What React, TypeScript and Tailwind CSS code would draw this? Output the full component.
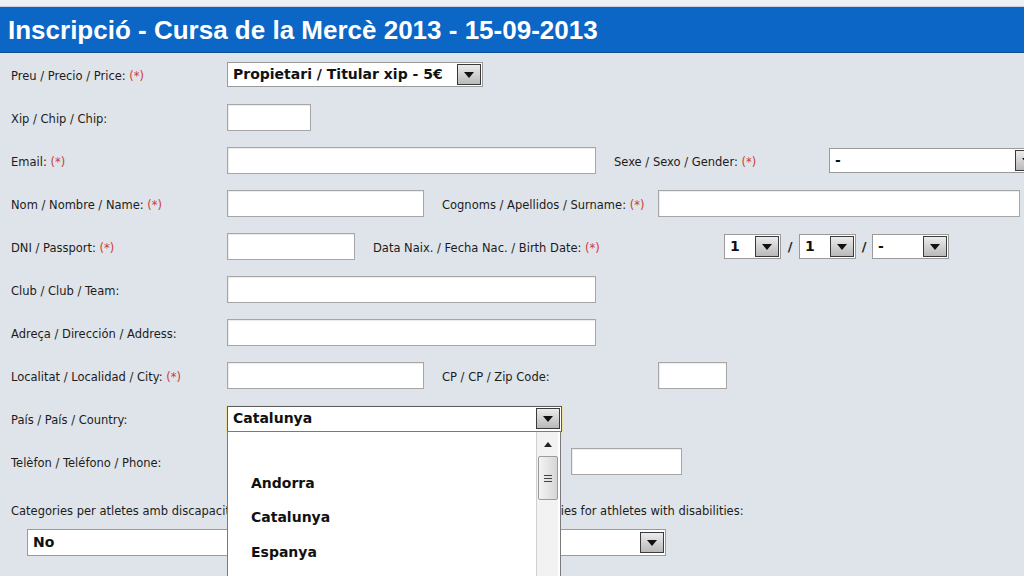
import React from "react";

const Req = () => <span className="text-[#cc3b3b]"> (*)</span>;

const Label = ({ text, req }: { text: string; req?: boolean }) => (
  <span className="text-[11.5px] text-[#1c1c1c] whitespace-nowrap">
    {text}
    {req && <Req />}
  </span>
);

const Row = ({ label, req, children }: { label: string; req?: boolean; children?: React.ReactNode }) => (
  <div className="flex items-center h-[43px]">
    <div className="w-[227px] pl-[11px] shrink-0">
      <Label text={label} req={req} />
    </div>
    {children}
  </div>
);

const Input = ({ w }: { w: string }) => (
  <div className={`h-[27px] border border-[#a6a6a6] bg-white shadow-[inset_1px_1px_1px_rgba(0,0,0,0.08)] shrink-0 ${w}`} />
);

const Arrow = () => (
  <div className="w-[24px] h-[21px] mr-[1px] border border-[#3a3a3a] bg-gradient-to-b from-[#ececec] to-[#b9b9b9] flex items-center justify-center shrink-0">
    <svg width="10" height="6" viewBox="0 0 10 6">
      <path d="M0 0 L10 0 L5 6 Z" fill="#111" />
    </svg>
  </div>
);

const Select = ({ w, text, h = "h-[25px]" }: { w: string; text: string; h?: string }) => (
  <div className={`flex items-center border border-[#9a9a9a] bg-white shrink-0 ${w} ${h}`}>
    <span className="flex-1 pl-[5px] text-[14px] font-bold text-[#111] whitespace-nowrap overflow-hidden">{text}</span>
    <Arrow />
  </div>
);

const SecondLabel = ({ text, req, w }: { text: string; req?: boolean; w: string }) => (
  <div className={`ml-[18px] shrink-0 ${w}`}>
    <Label text={text} req={req} />
  </div>
);

export default function App() {
  return (
    <div className="relative w-[1024px] h-[576px] overflow-hidden bg-[#dfe4ea] font-['DejaVu_Sans',sans-serif]">
      <div className="h-[7px] bg-[#eef1f4] border-b border-[#c8d2dc]" />
      <div className="h-[46px] bg-[#0b66c6] border-b border-[#0a4f9a] flex items-center pl-[8px]">
        <span className="text-white text-[26px] font-bold font-['Liberation_Sans',Arial,sans-serif] leading-none">
          Inscripció - Cursa de la Mercè 2013 - 15-09-2013
        </span>
      </div>

      <Row label="Preu / Precio / Price:" req>
        <Select w="w-[256px]" text="Propietari / Titular xip - 5€" />
      </Row>
      <Row label="Xip / Chip / Chip:">
        <Input w="w-[84px]" />
      </Row>
      <Row label="Email:" req>
        <Input w="w-[369px]" />
        <SecondLabel text="Sexe / Sexo / Gender:" req w="w-[215px]" />
        <Select w="w-[212px]" text="-" />
      </Row>
      <Row label="Nom / Nombre / Name:" req>
        <Input w="w-[197px]" />
        <SecondLabel text="Cognoms / Apellidos / Surname:" req w="w-[216px]" />
        <Input w="w-[362px]" />
      </Row>
      <Row label="DNI / Passport:" req>
        <Input w="w-[128px]" />
        <SecondLabel text="Data Naix. / Fecha Nac. / Birth Date:" req w="w-[351px]" />
        <Select w="w-[57px]" text="1" />
        <span className="w-[18px] text-center text-[13px] font-bold text-[#222] shrink-0">/</span>
        <Select w="w-[57px]" text="1" />
        <span className="w-[16px] text-center text-[13px] font-bold text-[#222] shrink-0">/</span>
        <Select w="w-[77px]" text="-" />
      </Row>
      <Row label="Club / Club / Team:">
        <Input w="w-[369px]" />
      </Row>
      <Row label="Adreça / Dirección / Address:">
        <Input w="w-[369px]" />
      </Row>
      <Row label="Localitat / Localidad / City:" req>
        <Input w="w-[197px]" />
        <SecondLabel text="CP / CP / Zip Code:" w="w-[216px]" />
        <Input w="w-[69px]" />
      </Row>
      <Row label="País / País / Country:">
        <div className="flex items-center h-[26px] w-[335px] border border-[#5c5c5c] bg-white shadow-[0_0_0_1px_#eadfa8] shrink-0">
          <span className="flex-1 pl-[5px] text-[14px] font-bold text-[#111]">Catalunya</span>
          <Arrow />
        </div>
      </Row>
      <Row label="Telèfon / Teléfono / Phone:">
        <Input w="w-[110px]" />
        <SecondLabel text="Mòbil / Móvil / Mobile:" w="w-[216px]" />
        <Input w="w-[111px]" />
      </Row>

      <div className="pl-[11px] pt-[15px]">
        <Label text="Categories per atletes amb discapacitat / Categorías para atletas con discapacidades / Categories for athletes with disabilities:" />
      </div>
      <div className="pl-[27px] pt-[7px]">
        <Select w="w-[639px]" h="h-[27px]" text="No" />
      </div>
      <div className="pl-[600px] pt-[15px]">
        <span className="text-[13px] font-bold text-[#222]">Autorització / Autorización</span>
      </div>

      <div className="absolute left-[227px] top-[431px] w-[334px] h-[160px] bg-white border border-[#7a7a7a] flex">
        <div className="flex-1 flex flex-col">
          <div className="h-[34px] shrink-0" />
          {["Andorra", "Catalunya", "Espanya", "França"].map((c) => (
            <div key={c} className="h-[34.5px] shrink-0 flex items-center pl-[23px] text-[14px] font-bold text-[#111]">
              {c}
            </div>
          ))}
        </div>
        <div className="w-[22px] mr-[2px] bg-[#f2f2f2] border-l border-[#d0d0d0] flex flex-col items-center">
          <div className="h-[24px] flex items-center justify-center">
            <svg width="8" height="5" viewBox="0 0 8 5">
              <path d="M0 5 L8 5 L4 0 Z" fill="#222" />
            </svg>
          </div>
          <div className="w-[20px] h-[44px] border border-[#9a9a9a] rounded-[2px] bg-gradient-to-r from-[#f4f4f4] to-[#d6d6d6] flex flex-col items-center justify-center gap-[2px]">
            <div className="w-[8px] h-[1px] bg-[#444]" />
            <div className="w-[8px] h-[1px] bg-[#444]" />
            <div className="w-[8px] h-[1px] bg-[#444]" />
          </div>
        </div>
      </div>
    </div>
  );
}
